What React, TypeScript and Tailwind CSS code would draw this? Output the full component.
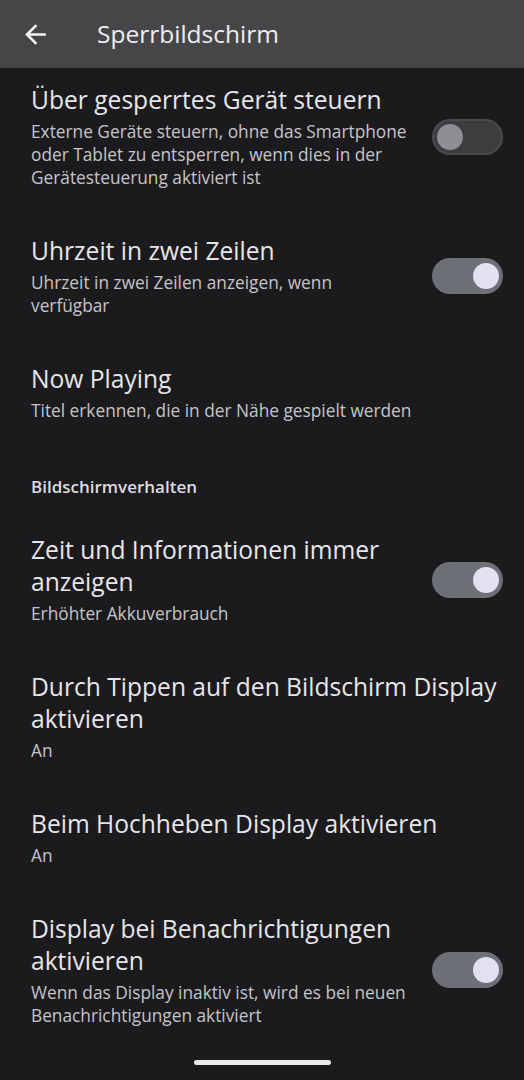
import React from "react";

type Item = {
  title: string;
  summary?: string;
  toggle?: "on" | "off";
  first?: boolean;
};

function Toggle({ on }: { on: boolean }) {
  return on ? (
    <div className="flex h-[36px] w-[71px] items-center justify-end rounded-full bg-[#6e7077] pr-[4px]">
      <div className="h-[26px] w-[26px] rounded-full bg-[#e1e1f2]" />
    </div>
  ) : (
    <div className="flex h-[36px] w-[71px] items-center rounded-full border-2 border-[#4b4b4e] bg-[#3d3d40] pl-[3px]">
      <div className="h-[26px] w-[26px] rounded-full bg-[#8f8e93]" />
    </div>
  );
}

function Row({ title, summary, toggle, first }: Item) {
  return (
    <div
      className={`flex items-center pl-[31px] ${toggle ? "pr-[21px]" : "pr-[8px]"} ${first ? "pt-[16px]" : "pt-[23px]"} pb-[23px]`}
    >
      <div className={toggle ? "w-[380px]" : "flex-1"}>
        <div className="text-[24.6px] leading-[32px] text-[#e6e5ea]">{title}</div>
        {summary && (
          <div className="mt-[4px] text-[17.3px] leading-[23px] text-[#c5c4ca]">{summary}</div>
        )}
      </div>
      {toggle && (
        <div className="ml-auto">
          <Toggle on={toggle === "on"} />
        </div>
      )}
    </div>
  );
}

export default function App() {
  return (
    <div
      className="flex h-[1080px] w-[524px] flex-col overflow-hidden bg-[#1b1b1d]"
      style={{ fontFamily: "'Open Sans', Roboto, sans-serif" }}
    >
      {/* top app bar */}
      <div className="flex h-[68px] shrink-0 items-center bg-[#464648]">
        <div className="ml-[20px] flex h-[31px] w-[31px] items-center justify-center">
          <svg viewBox="0 0 24 24" className="h-[31px] w-[31px]" fill="#f2f2f4">
            <path d="M20 11H7.83l5.59-5.59L12 4l-8 8 8 8 1.41-1.41L7.83 13H20v-2z" />
          </svg>
        </div>
        <div className="ml-[46px] text-[24.5px] text-[#eeeef0]">Sperrbildschirm</div>
      </div>

      <Row
        first
        title="Über gesperrtes Gerät steuern"
        summary="Externe Geräte steuern, ohne das Smartphone oder Tablet zu entsperren, wenn dies in der Gerätesteuerung aktiviert ist"
        toggle="off"
      />
      <Row
        title="Uhrzeit in zwei Zeilen"
        summary="Uhrzeit in zwei Zeilen anzeigen, wenn verfügbar"
        toggle="on"
      />
      <Row title="Now Playing" summary="Titel erkennen, die in der Nähe gespielt werden" />

      {/* section header */}
      <div className="pl-[31px] pt-[32px] pb-[14px] text-[17px] font-semibold leading-[20px] text-[#dcdbe4]">
        Bildschirmverhalten
      </div>

      <Row
        title="Zeit und Informationen immer anzeigen"
        summary="Erhöhter Akkuverbrauch"
        toggle="on"
      />
      <Row title="Durch Tippen auf den Bildschirm Display aktivieren" summary="An" />
      <Row title="Beim Hochheben Display aktivieren" summary="An" />
      <Row
        title="Display bei Benachrichtigungen aktivieren"
        summary="Wenn das Display inaktiv ist, wird es bei neuen Benachrichtigungen aktiviert"
        toggle="on"
      />

      {/* gesture bar */}
      <div className="mt-auto flex justify-center pb-[15px]">
        <div className="h-[5px] w-[137px] rounded-full bg-[#e8e8ea]" />
      </div>
    </div>
  );
}
